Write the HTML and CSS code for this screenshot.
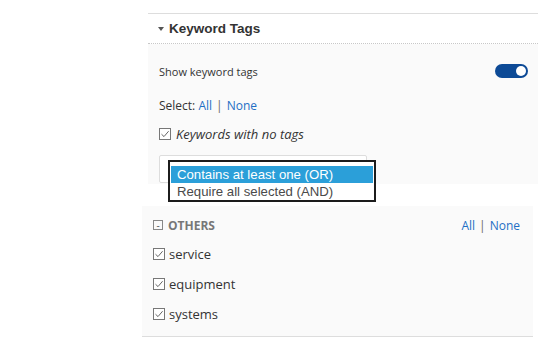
FILE: index.html
```html
<!DOCTYPE html>
<html lang="en">
<head>
    <meta charset="UTF-8">
    <title>Keyword Tags</title>
    <link rel="stylesheet" href="styles.css">
</head>
<body>
  <div class="page">
    <section class="panel">
      <h2 class="panel-head"><span class="caret"></span>Keyword Tags</h2>
      <div class="panel-body">
        <div class="row toggle-row">
          <span>Show keyword tags</span>
          <span class="switch"><span class="knob"></span></span>
        </div>
        <div class="row select-row">
          Select:&nbsp;<a href="#">All</a><span class="sep">|</span><a href="#">None</a>
        </div>
        <label class="row check-row italic">
          <span class="box"><svg width="10" height="10" viewBox="0 0 10 10"><path d="M1.5 5.2 L4 7.6 L8.6 2.2" fill="none" stroke="#666" stroke-width="1"/></svg></span>
          Keywords with no tags
        </label>
        <div class="mode">
          <div class="mode-select"></div>
          <!-- 下拉選單展開狀態 -->
          <ul class="mode-list">
            <li class="active">Contains at least one (OR)</li>
            <li>Require all selected (AND)</li>
          </ul>
        </div>
      </div>
    </section>

    <section class="group">
      <div class="group-head">
        <span class="minus">-</span>
        <span class="group-title">OTHERS</span>
        <span class="group-links"><a href="#">All</a><span class="sep">|</span><a href="#">None</a></span>
      </div>
      <label class="row item-row">
        <span class="box"><svg width="10" height="10" viewBox="0 0 10 10"><path d="M1.5 5.2 L4 7.6 L8.6 2.2" fill="none" stroke="#666" stroke-width="1"/></svg></span>
        service
      </label>
      <label class="row item-row">
        <span class="box"><svg width="10" height="10" viewBox="0 0 10 10"><path d="M1.5 5.2 L4 7.6 L8.6 2.2" fill="none" stroke="#666" stroke-width="1"/></svg></span>
        equipment
      </label>
      <label class="row item-row">
        <span class="box"><svg width="10" height="10" viewBox="0 0 10 10"><path d="M1.5 5.2 L4 7.6 L8.6 2.2" fill="none" stroke="#666" stroke-width="1"/></svg></span>
        systems
      </label>
    </section>
  </div>
</body>
</html>
```

FILE: styles.css
```css
html, body {
  margin: 0;
  padding: 0;
  background: #ffffff;
  font-family: 'Open Sans', 'Noto Sans', sans-serif;
  color: #333333;
}

a {
  color: #1f6fc5;
  text-decoration: none;
}

.sep {
  color: #666666;
  margin: 0 4px;
}

/* 外層：左側空白 */
.page {
  padding: 13px 4px 0 142px;
}

/* 上方面板 */
.panel {
  margin-left: 6px;
  border-top: 1px solid #dddddd;
}

.panel-head {
  display: flex;
  align-items: center;
  height: 29px;
  margin: 0;
  padding-left: 10px;
  font-family: 'Liberation Sans', Arial, sans-serif;
  font-size: 13.5px;
  font-weight: bold;
  color: #333333;
  border-bottom: 1px dotted #c8c8c8;
}

.caret {
  width: 0;
  height: 0;
  border-left: 3.5px solid transparent;
  border-right: 3.5px solid transparent;
  border-top: 4px solid #555555;
  margin-right: 5px;
  margin-top: 1px;
}

.panel-body {
  background: #fafafa;
  padding: 12px 10px 1px 11px;
}

.row {
  display: flex;
  align-items: center;
}

.toggle-row {
  height: 30px;
  justify-content: space-between;
  font-size: 11px;
}

.switch {
  position: relative;
  width: 33px;
  height: 14px;
  border-radius: 7px;
  background: #0d4a96;
}

.knob {
  position: absolute;
  right: 2px;
  top: 2px;
  width: 10px;
  height: 10px;
  border-radius: 50%;
  background: #ffffff;
}

.select-row {
  height: 38px;
  font-size: 12px;
}

.check-row {
  height: 20px;
  font-size: 13px;
}

.italic {
  font-style: italic;
}

.box {
  display: inline-flex;
  align-items: center;
  justify-content: center;
  width: 10px;
  height: 10px;
  border: 1px solid #777777;
  background: #ffffff;
  margin-right: 5px;
  flex-shrink: 0;
}

/* 下拉選單 */
.mode {
  position: relative;
  margin-top: 11px;
}

.mode-select {
  width: 206px;
  height: 26px;
  border: 1px solid #dddddd;
  border-radius: 2px;
  background: #ffffff;
}

.mode-list {
  position: absolute;
  left: 9px;
  top: 5px;
  width: 202px;
  margin: 0;
  padding: 4px 1px 0;
  list-style: none;
  border: 2px solid #1c1c1c;
  background: #ffffff;
  font-family: 'Liberation Sans', Arial, sans-serif;
  font-size: 13.2px;
  color: #4a4a4a;
  z-index: 5;
}

.mode-list li {
  height: 17px;
  line-height: 17px;
  padding-left: 6px;
}

.mode-list li.active {
  background: #2b9fd9;
  color: #ffffff;
}

/* OTHERS 群組 */
.group {
  margin-top: 22px;
  width: 367px;
  padding: 5px 13px 7px 11px;
  background: #fafafa;
  border-bottom: 1px solid #dddddd;
}

.group-head {
  display: flex;
  align-items: center;
  height: 28px;
}

.minus {
  display: inline-flex;
  align-items: center;
  justify-content: center;
  width: 8px;
  height: 8px;
  border: 1px solid #888888;
  font-size: 10px;
  line-height: 8px;
  color: #555555;
  margin-right: 5px;
}

.group-title {
  font-size: 12px;
  font-weight: bold;
  color: #777777;
}

.group-links {
  margin-left: auto;
  font-size: 12px;
}

.item-row {
  height: 30px;
  font-size: 13px;
}

.item-row .box {
  margin-right: 4px;
}
```
